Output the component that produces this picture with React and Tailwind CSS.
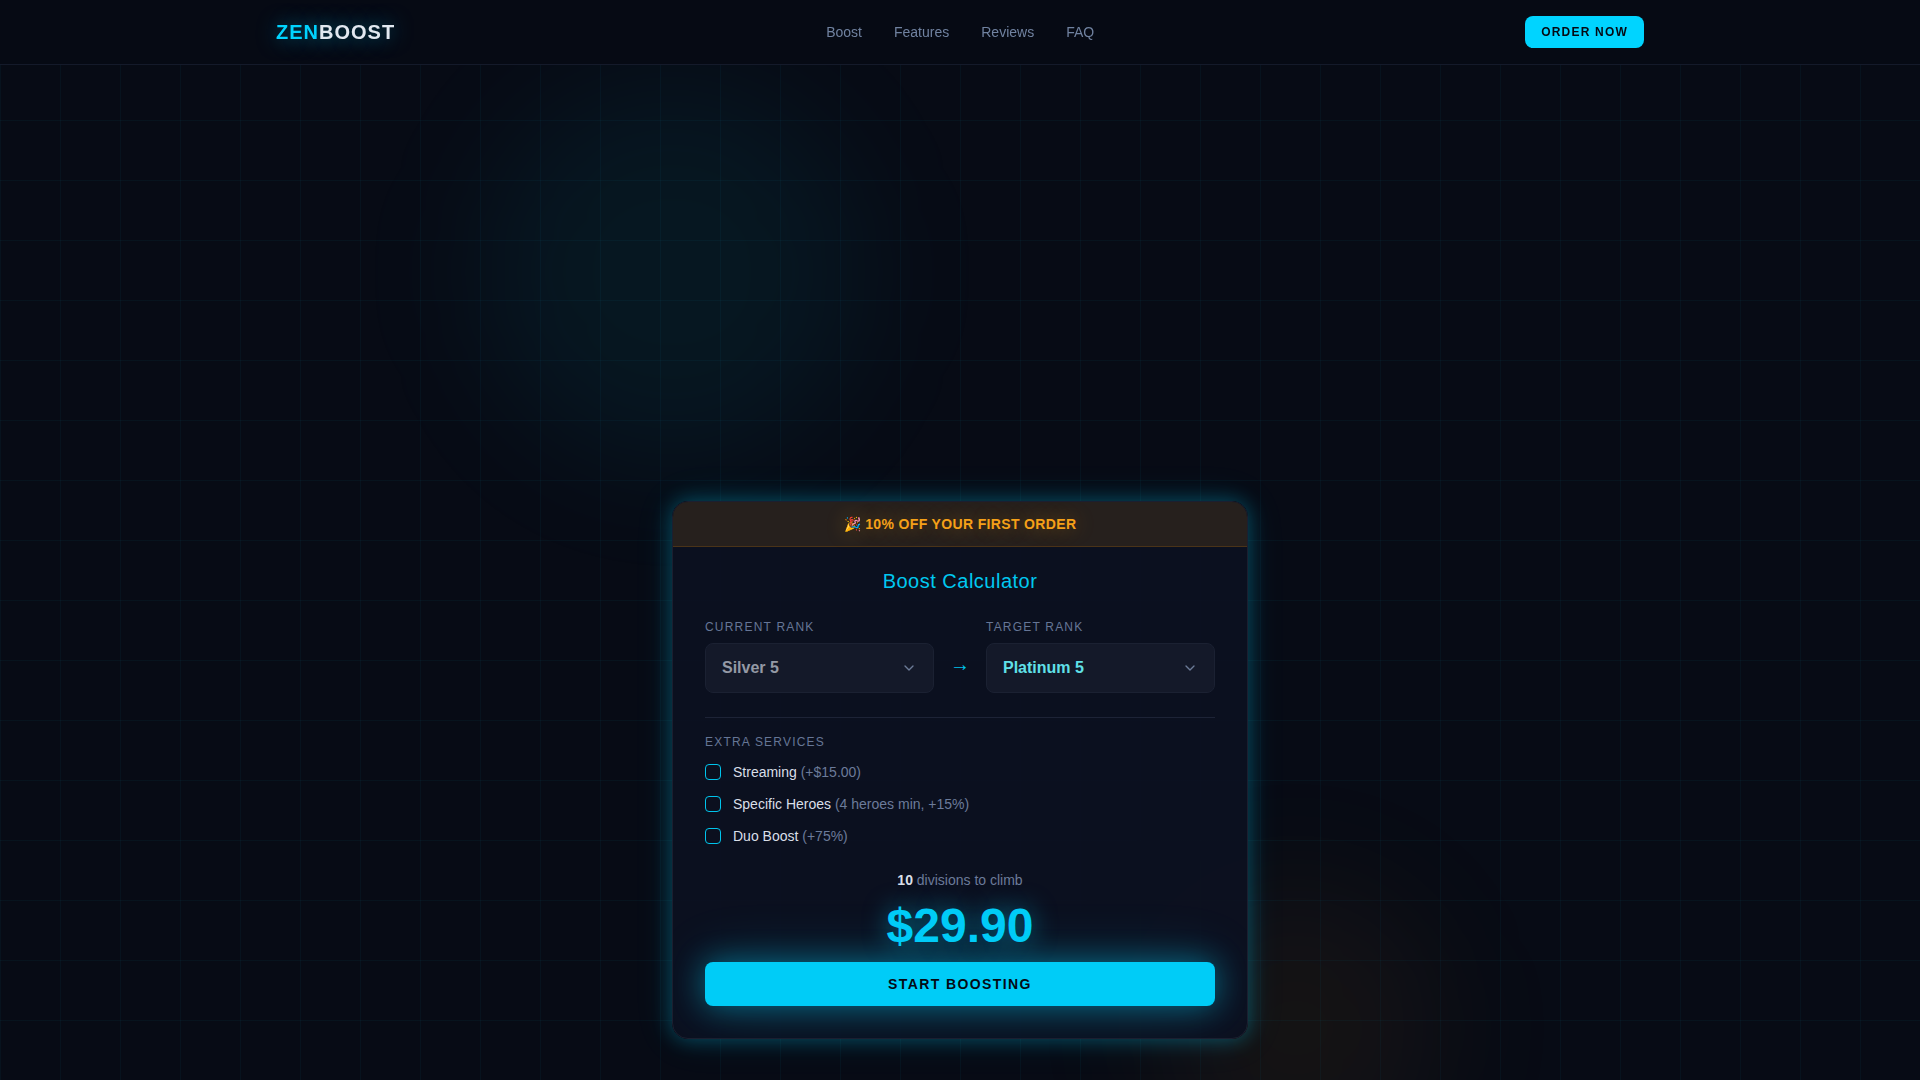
import { ChevronDown } from "lucide-react";

const navLinks = ["Boost", "Features", "Reviews", "FAQ"];
const ranks = ["Silver 5", "Gold 5", "Platinum 5", "Diamond 5"];
const services = [
  { name: "Streaming", note: "(+$15.00)" },
  { name: "Specific Heroes", note: "(4 heroes min, +15%)" },
  { name: "Duo Boost", note: "(+75%)" },
];

function Header() {
  return (
    <header className="fixed inset-x-0 top-0 z-20 border-b border-[#141a2a] bg-[#060a14]">
      <div className="mx-auto flex h-16 max-w-[1400px] items-center justify-between px-4">
        <a
          href="#top"
          className="text-xl font-bold tracking-wider text-[#e2e8f0] [text-shadow:0_0_20px_rgba(0,212,255,0.5)]"
        >
          <span className="text-[#00d4ff]">ZEN</span>BOOST
        </a>
        <nav className="flex items-center gap-8 text-sm text-[#7082a0]">
          {navLinks.map((link) => (
            <a key={link} href={`#${link.toLowerCase()}`}>
              {link}
            </a>
          ))}
        </nav>
        <button
          type="button"
          className="h-8 rounded-lg bg-[#00d4ff] px-4 text-xs font-bold tracking-widest text-[#050a14]"
        >
          ORDER NOW
        </button>
      </div>
    </header>
  );
}

function RankSelect({ id, label, value, color }) {
  return (
    <div className="min-w-0">
      <label htmlFor={id} className="mb-2 block text-xs tracking-widest text-[#667696]">
        {label}
      </label>
      <div className="relative">
        <select
          id={id}
          defaultValue={value}
          className={`h-[50px] w-full appearance-none rounded-lg border border-[#1b2132] bg-[#141929] px-4 text-base font-bold ${color}`}
        >
          {ranks.map((rank) => (
            <option key={rank}>{rank}</option>
          ))}
        </select>
        <ChevronDown className="pointer-events-none absolute inset-y-0 right-[17px] my-auto size-4 text-[#6c7b98]" />
      </div>
    </div>
  );
}

function Calculator() {
  return (
    <form className="w-full max-w-[576px] overflow-hidden rounded-2xl border border-[#1b1f30] bg-[#0c1120]/90 shadow-[0_0_20px_rgba(0,212,255,0.3),0_0_40px_rgba(0,212,255,0.1)]">
      <p className="border-b border-[#4a3318] bg-[#26201d] py-3 text-center text-sm font-bold tracking-wide text-[#f5a018] [text-shadow:0_0_20px_rgba(255,159,10,0.4)]">
        🎉 10% OFF YOUR FIRST ORDER
      </p>
      <div className="px-8 pt-5 pb-8">
        <h2 className="mb-6 text-center text-xl tracking-wide text-[#00c8f0]">Boost Calculator</h2>
        <div className="grid grid-cols-[1fr_auto_1fr] items-end gap-4">
          <RankSelect id="current" label="CURRENT RANK" value="Silver 5" color="text-[#9499a5]" />
          <span className="flex h-[50px] w-5 items-center justify-center pb-2 text-xl text-[#00c4ec]">→</span>
          <RankSelect id="target" label="TARGET RANK" value="Platinum 5" color="text-[#60e0e8]" />
        </div>
        <div role="group" aria-labelledby="extras" className="mt-6 border-t border-[#1d2336] pt-4">
          <p id="extras" className="text-xs tracking-widest text-[#667696]">
            EXTRA SERVICES
          </p>
          <div className="mt-3 flex flex-col gap-3">
            {services.map(({ name, note }) => (
              <label key={name} className="flex items-center gap-3 text-sm text-[#d9dfe8]">
                <input
                  type="checkbox"
                  className="size-4 appearance-none rounded border border-[#00c4ec] checked:bg-[#00c4ec]"
                />
                <span>
                  {name} <span className="text-[#6b7b9a]">{note}</span>
                </span>
              </label>
            ))}
          </div>
        </div>
        <p className="mt-6 text-center text-sm text-[#6b7b9a]">
          <strong className="text-[#d9dfe8]">10</strong> divisions to climb
        </p>
        <p className="mt-3 mb-3 text-center text-5xl leading-[48px] font-bold text-[#00ccf7] [text-shadow:0_0_24px_rgba(0,212,255,0.5)]">
          $29.90
        </p>
        <button
          type="submit"
          className="h-11 w-full rounded-lg bg-[#00ccf7] text-sm font-bold tracking-widest text-[#050a14] shadow-[0_0_30px_rgba(0,212,255,0.4),0_0_60px_rgba(0,212,255,0.2)]"
        >
          START BOOSTING
        </button>
      </div>
    </form>
  );
}

export default function App() {
  return (
    <div className="relative min-h-screen overflow-hidden bg-[#070b15] font-['Liberation_Sans',Arial,sans-serif]">
      <Header />
      <div className="pointer-events-none absolute top-20 left-1/4 size-96 rounded-full bg-[#00d4e8]/6 blur-[64px]" />
      <div className="pointer-events-none absolute right-1/4 -bottom-[92px] size-72 rounded-full bg-[#ff9f0a]/6 blur-[64px]" />
      <div className="pointer-events-none absolute inset-0 bg-[linear-gradient(rgba(0,212,255,0.04)_1px,transparent_1px),linear-gradient(90deg,rgba(0,212,255,0.04)_1px,transparent_1px)] bg-[size:60px_60px]" />
      <main id="top" className="relative flex min-h-screen flex-col items-center justify-end px-4 pt-24 pb-[41px]">
        <Calculator />
      </main>
    </div>
  );
}
